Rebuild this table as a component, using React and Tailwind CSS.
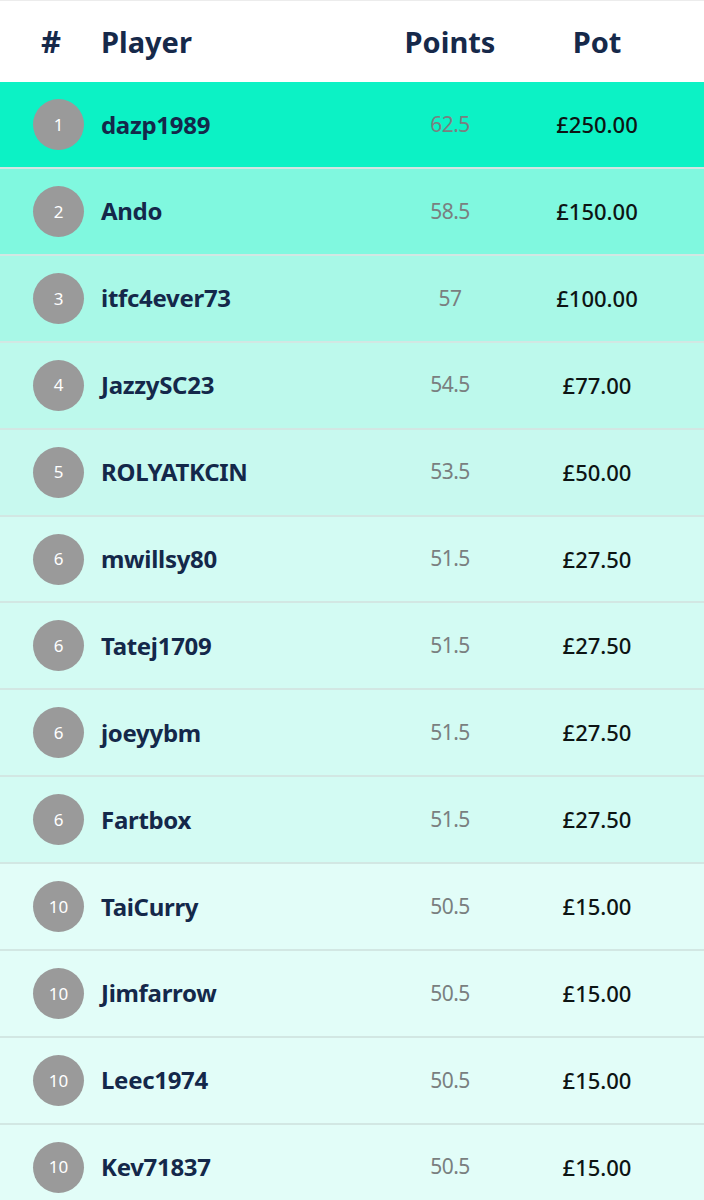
import React from 'react';

const players = [
  { rank: 1, name: 'dazp1989', points: '62.5', pot: '£250.00', bg: 'bg-[#0cf2c5]' },
  { rank: 2, name: 'Ando', points: '58.5', pot: '£150.00', bg: 'bg-[#80f8df]' },
  { rank: 3, name: 'itfc4ever73', points: '57', pot: '£100.00', bg: 'bg-[#a8f8e7]' },
  { rank: 4, name: 'JazzySC23', points: '54.5', pot: '£77.00', bg: 'bg-[#bdf9ec]' },
  { rank: 5, name: 'ROLYATKCIN', points: '53.5', pot: '£50.00', bg: 'bg-[#c8f9ef]' },
  { rank: 6, name: 'mwillsy80', points: '51.5', pot: '£27.50', bg: 'bg-[#d3fbf3]' },
  { rank: 6, name: 'Tatej1709', points: '51.5', pot: '£27.50', bg: 'bg-[#d3fbf3]' },
  { rank: 6, name: 'joeyybm', points: '51.5', pot: '£27.50', bg: 'bg-[#d3fbf3]' },
  { rank: 6, name: 'Fartbox', points: '51.5', pot: '£27.50', bg: 'bg-[#d3fbf3]' },
  { rank: 10, name: 'TaiCurry', points: '50.5', pot: '£15.00', bg: 'bg-[#e2fdf8]' },
  { rank: 10, name: 'Jimfarrow', points: '50.5', pot: '£15.00', bg: 'bg-[#e2fdf8]' },
  { rank: 10, name: 'Leec1974', points: '50.5', pot: '£15.00', bg: 'bg-[#e2fdf8]' },
  { rank: 10, name: 'Kev71837', points: '50.5', pot: '£15.00', bg: 'bg-[#e2fdf8]' },
];

export default function App() {
  return (
    <div className="w-[704px] h-[1200px] overflow-hidden bg-white font-['Noto_Sans',sans-serif]">
      {/* Header */}
      <div className="h-[82px] flex items-center border-t border-[#ececec] text-[#16294a] font-bold text-[29px]">
        <div className="w-[101px] pl-[41px] text-[31px]">#</div>
        <div className="flex-1">Player</div>
        <div className="w-[120px] text-center">Points</div>
        <div className="w-[174px] text-center">Pot</div>
        <div className="w-[20px]" />
      </div>

      {players.map((p, i) => (
        <div
          key={i}
          className={`flex items-center ${p.bg} ${i > 0 ? 'h-[86.9px] border-t-2 border-[#d2e7e3]' : 'h-[85px]'}`}
        >
          <div className="w-[101px] pl-[33px]">
            <div className="w-[51px] h-[51px] rounded-full bg-[#9a9a9a] flex items-center justify-center text-white text-[17px]">
              {p.rank}
            </div>
          </div>
          <div className="flex-1 text-[24px] font-bold text-[#14284a] tracking-[-0.3px]">{p.name}</div>
          <div className="w-[120px] text-center text-[21px] text-[#7a7f80] tracking-[-0.5px]">{p.points}</div>
          <div className="w-[174px] text-center text-[22px] font-medium text-[#0d1414]">{p.pot}</div>
          <div className="w-[20px]" />
        </div>
      ))}
    </div>
  );
}
